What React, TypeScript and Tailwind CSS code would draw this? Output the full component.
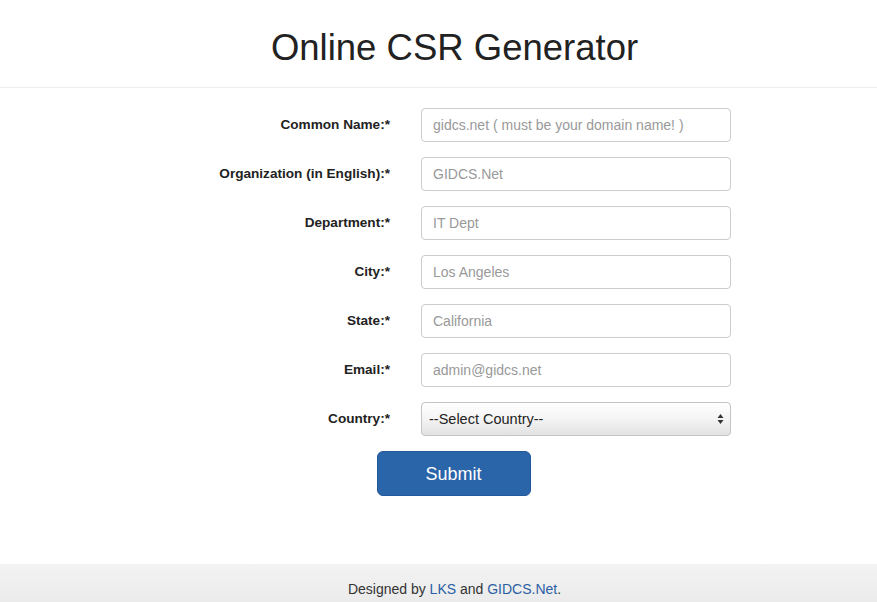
import { useState } from 'react';

const fields = [
  { label: 'Common Name:*', placeholder: 'gidcs.net ( must be your domain name! )' },
  { label: 'Organization (in English):*', placeholder: 'GIDCS.Net' },
  { label: 'Department:*', placeholder: 'IT Dept' },
  { label: 'City:*', placeholder: 'Los Angeles' },
  { label: 'State:*', placeholder: 'California' },
  { label: 'Email:*', placeholder: 'admin@gidcs.net' },
];

export default function App() {
  const [country, setCountry] = useState('');

  return (
    <div className="min-h-[602px] bg-white text-[#333] font-['Liberation_Sans',Arial,sans-serif] text-sm">
      <header className="border-b border-[#eee] pt-[28px] pb-[19px] pl-8">
        <h1 className="text-center text-[36.5px] leading-[40px] text-[#222]">Online CSR Generator</h1>
      </header>

      <form
        className="flex flex-col gap-[15px] pt-[20px]"
        onSubmit={(e) => e.preventDefault()}
      >
        {fields.map((f) => (
          <div key={f.label} className="flex items-center gap-[31px]">
            <label className="w-[390px] text-right text-[13.6px] font-bold text-[#222]">{f.label}</label>
            <input
              placeholder={f.placeholder}
              className="h-[34px] w-[310px] rounded border border-[#ccc] bg-white pl-[11px] pr-3 text-sm text-[#555] placeholder:text-[#999] focus:outline-none"
            />
          </div>
        ))}

        <div className="flex items-center gap-[31px]">
          <label className="w-[390px] text-right text-[13.6px] font-bold text-[#222]">Country:*</label>
          <div className="relative w-[310px]">
            <select
              value={country}
              onChange={(e) => setCountry(e.target.value)}
              className="h-[34px] w-full appearance-none rounded border border-[#c4c4c4] bg-gradient-to-b from-white via-[#f4f4f4] to-[#e2e2e2] pl-[7px] text-[14.5px] text-[#222] shadow-[inset_0_1px_0_#fff] focus:outline-none"
            >
              <option value="">--Select Country--</option>
              <option value="US">United States</option>
              <option value="CA">Canada</option>
            </select>
            <svg className="pointer-events-none absolute right-[7px] top-[11px]" width="7" height="12" viewBox="0 0 7 12">
              <path d="M3.5 1 L6.5 5 H0.5 Z" fill="#333" />
              <path d="M3.5 11 L6.5 7 H0.5 Z" fill="#333" />
            </svg>
          </div>
        </div>

        <div className="flex justify-center pl-[30px]">
          <button
            type="submit"
            className="h-[45px] w-[154px] rounded-md border border-[#23589a] bg-[#2a64a9] text-lg text-white"
          >
            Submit
          </button>
        </div>
      </form>

      <footer className="mt-[68px] h-[38px] bg-gradient-to-b from-[#f3f3f3] to-[#ebebeb] pt-[15px] pl-8 text-center text-[#333]">
        Designed by <a href="#" className="text-[#2a5fa3]">LKS</a> and{' '}
        <a href="#" className="text-[#2a5fa3]">GIDCS.Net</a>.
      </footer>
    </div>
  );
}
